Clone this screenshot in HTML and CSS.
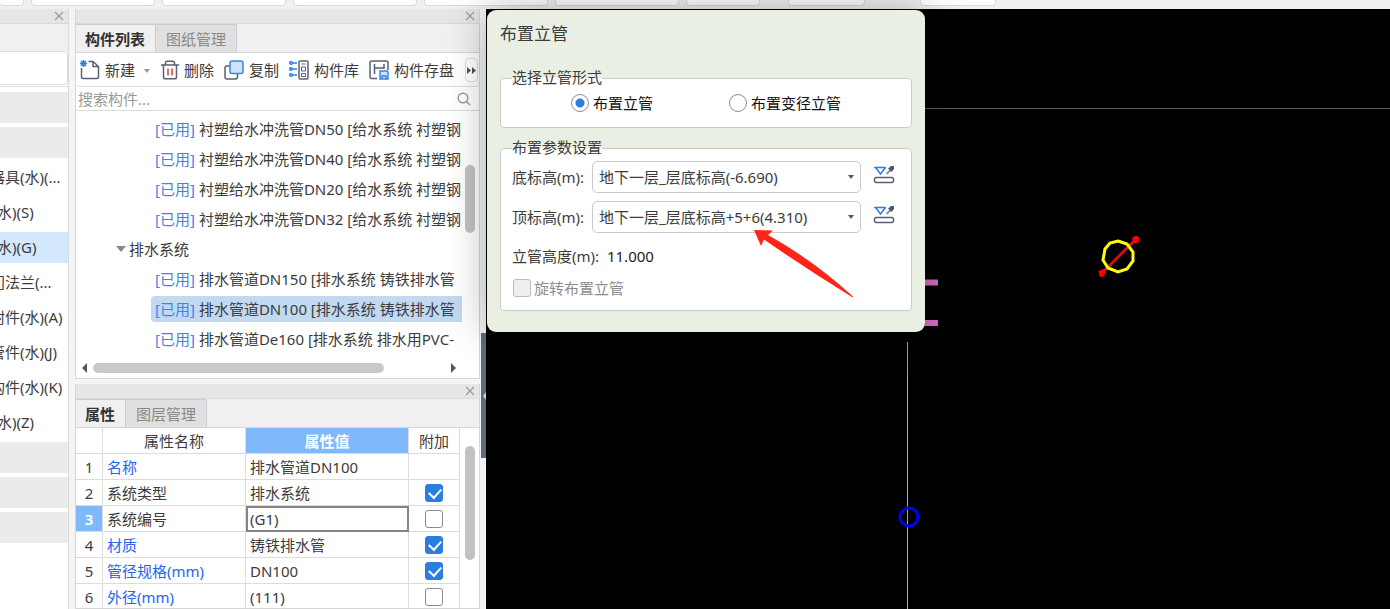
FILE: index.html
```html
<!DOCTYPE html>
<html lang="zh-CN">
<head>
<meta charset="utf-8">
<title>布置立管</title>
<link rel="stylesheet" href="styles.css">
</head>
<body>
<header class="ribbon">
  <div class="group group-first"></div><div class="group"></div><div class="group"></div><div class="group"></div><div class="group"></div><div class="group"></div><div class="group group-small"></div><div class="group group-mid"></div><div class="group group-last"></div>
</header>
<main class="workspace">
  <nav class="nav">
    <div class="titlebar"><button class="close" aria-label="关闭"><svg width="10" height="10" viewBox="0 0 10 10"><path d="M1 1l8 8M9 1l-8 8"/></svg></button></div>
    <div class="nav-head"></div>
    <div class="nav-box"></div>
    <div class="nav-list">
      <div class="nav-item band"></div>
      <div class="nav-item band"></div>
      <a class="nav-item long" href="#">器具(水)(...</a>
      <a class="nav-item" href="#">水)(S)</a>
      <a class="nav-item current" href="#">水)(G)</a>
      <a class="nav-item long" href="#">门法兰(...</a>
      <a class="nav-item long" href="#">附件(水)(A)</a>
      <a class="nav-item long" href="#">管件(水)(J)</a>
      <a class="nav-item long" href="#">构件(水)(K)</a>
      <a class="nav-item" href="#">水)(Z)</a>
      <div class="nav-item band"></div>
      <div class="nav-item band"></div>
      <div class="nav-item band"></div>
    </div>
  </nav>

  <div class="side">
    <section class="panel">
      <div class="titlebar"><button class="close" aria-label="关闭"><svg width="10" height="10" viewBox="0 0 10 10"><path d="M1 1l8 8M9 1l-8 8"/></svg></button></div>
      <div class="tabs"><button class="tab active">构件列表</button><button class="tab">图纸管理</button></div>
      <div class="tools">
        <button class="tool"><svg width="20" height="20" viewBox="0 0 20 20"><path class="ink" d="M1.500 8v9q0 1.500 1.500 1.500h14q1.500 0 1.500-1.500V6.500L13 1.500H8.500M13 1.500v5h5.500"/><path class="blue" d="M1 1l5 5M6 1L1 6M3.500 0v7M0 3.500h7"/></svg>新建<i class="caret"></i></button>
        <button class="tool"><svg width="18" height="20" viewBox="0 0 18 20"><path class="ink" d="M0 5h18M2.500 5v12q0 1.800 1.800 1.800h9.400q1.800 0 1.800-1.800V5M4.500 5V3q0-1.800 1.800-1.800h5.400q1.800 0 1.800 1.800v2"/><path class="red" d="M7 8.500v7M11 8.500v7"/></svg>删除</button>
        <button class="tool"><svg width="20" height="20" viewBox="0 0 20 20"><rect class="ink" x="1" y="6" width="12.500" height="13" rx="2"/><rect class="copy" x="6" y="1" width="13" height="12.500" rx="2"/></svg>复制</button>
        <button class="tool"><svg width="20" height="20" viewBox="0 0 20 20"><rect class="ink" x="10" y="1" width="9" height="18" rx="1"/><path class="ink thin" d="M12.500 4h4M12.500 7h4v4h-4zM12.500 13.500h4v3h-4z"/><path class="blue" d="M3 3h5M3 9h5M3 15h5"/><circle class="blue" cx="2" cy="3" r="1.300"/><circle class="blue" cx="2" cy="9" r="1.300"/><circle class="blue" cx="2" cy="15" r="1.300"/></svg>构件库</button>
        <button class="tool"><svg width="20" height="20" viewBox="0 0 20 20"><path class="ink" d="M8 18.500H3Q1 18.500 1 16.500V3Q1 1 3 1h14q2 0 2 2v7M5.500 4v10M5.500 8H15M15 4v5"/><path class="copy" d="M11 11h7l1 1v7h-8zM13 19v-3h4v3"/></svg>构件存盘</button>
        <button class="more" aria-label="更多"><svg width="9" height="7" viewBox="0 0 9 7"><path d="M0 0l4 3.500L0 7zM5 0l4 3.500L5 7z"/></svg></button>
      </div>
      <div class="search"><input type="text" placeholder="搜索构件..." aria-label="搜索构件"><svg width="14" height="14" viewBox="0 0 14 14"><circle cx="6" cy="6" r="4.800"/><path d="M9.500 9.500L13 13"/></svg></div>
      <div class="tree-wrap">
        <ul class="tree">
          <li class="leaf"><b>[已用]</b>衬塑给水冲洗管DN50 [给水系统 衬塑钢</li>
          <li class="leaf"><b>[已用]</b>衬塑给水冲洗管DN40 [给水系统 衬塑钢</li>
          <li class="leaf"><b>[已用]</b>衬塑给水冲洗管DN20 [给水系统 衬塑钢</li>
          <li class="leaf"><b>[已用]</b>衬塑给水冲洗管DN32 [给水系统 衬塑钢</li>
          <li class="branch"><i class="open"></i>排水系统</li>
          <li class="leaf"><b>[已用]</b>排水管道DN150 [排水系统 铸铁排水管</li>
          <li class="leaf selected"><b>[已用]</b>排水管道DN100 [排水系统 铸铁排水管</li>
          <li class="leaf"><b>[已用]</b>排水管道De160 [排水系统 排水用PVC-</li>
        </ul>
        <div class="vbar"><div class="thumb"></div></div>
      </div>
      <div class="hbar"><i class="left"></i><div class="track"><div class="thumb"></div></div><i class="right"></i></div>
    </section>

    <section class="panel props">
      <div class="titlebar"><button class="close" aria-label="关闭"><svg width="10" height="10" viewBox="0 0 10 10"><path d="M1 1l8 8M9 1l-8 8"/></svg></button></div>
      <div class="tabs"><button class="tab active">属性</button><button class="tab">图层管理</button></div>
      <div class="grid-wrap">
        <table class="grid">
          <colgroup><col class="c-num"><col class="c-name"><col class="c-value"><col class="c-extra"></colgroup>
          <thead><tr><th></th><th>属性名称</th><th class="hot">属性值</th><th>附加</th></tr></thead>
          <tbody>
            <tr><td>1</td><td class="link">名称</td><td>排水管道DN100</td><td></td></tr>
            <tr><td>2</td><td>系统类型</td><td>排水系统</td><td><input type="checkbox" aria-label="附加 系统类型" checked></td></tr>
            <tr><td class="hot">3</td><td>系统编号</td><td class="editing">(G1)</td><td><input type="checkbox" aria-label="附加 系统编号"></td></tr>
            <tr><td>4</td><td class="link">材质</td><td>铸铁排水管</td><td><input type="checkbox" aria-label="附加 材质" checked></td></tr>
            <tr><td>5</td><td class="link">管径规格(mm)</td><td>DN100</td><td><input type="checkbox" aria-label="附加 管径规格" checked></td></tr>
            <tr><td>6</td><td class="link">外径(mm)</td><td>(111)</td><td><input type="checkbox" aria-label="附加 外径"></td></tr>
          </tbody>
        </table>
        <div class="vbar"><div class="thumb"></div></div>
      </div>
    </section>
  </div>

  <div class="splitter"><button class="grip" aria-label="收起"><i class="left"></i></button></div>

  <section class="canvas">
    <svg class="drawing">
      <path d="M438 99.500H3000" stroke="#5c5c5c"/>
      <path d="M421.500 333V3000" stroke="#c98ac2"/>
      <path d="M439 273.500h13M439 314h13" stroke="#d56bc0" stroke-width="6"/>
      <circle cx="423" cy="508" r="9" fill="none" stroke="#0000f0" stroke-width="3"/>
      <path d="M616 264L649 231" stroke="#f00" stroke-width="2.500"/>
      <path d="M612.500 262l5-2 2.500 4-3 4-3.500-.5zM646 229l4-2.500 3.500 2-1 5-4 1z" fill="#f00"/>
      <polygon points="632,232 641,235 647,243 647,252 641,260 632,263 622,259 617,251 619,240 624,234" fill="none" stroke="#ff0" stroke-width="3"/>
    </svg>
    <form class="dialog">
      <h2>布置立管</h2>
      <fieldset class="modes">
        <legend>选择立管形式</legend>
        <div class="radios">
          <label><input type="radio" name="mode" checked>布置立管</label>
          <label><input type="radio" name="mode">布置变径立管</label>
        </div>
      </fieldset>
      <fieldset class="params">
        <legend>布置参数设置</legend>
        <div class="row">
          <label for="bottom">底标高(m):</label>
          <span class="combo"><select id="bottom"><option>地下一层_层底标高(-6.690)</option></select></span>
          <button type="button" class="pick" aria-label="拾取底标高"><svg width="22" height="20" viewBox="0 0 22 20"><path class="blue" d="M1 2.500h12M3 3l4.500 6L12 3"/><path class="stem" d="M13.500 9l5-5"/><path class="head" d="M15 3.500l3-2.500h3v3l-2.500 3z"/><rect class="ink" x="1.500" y="12.500" width="19" height="5" rx="2"/></svg></button>
        </div>
        <div class="row">
          <label for="top">顶标高(m):</label>
          <span class="combo"><select id="top"><option>地下一层_层底标高+5+6(4.310)</option></select></span>
          <button type="button" class="pick" aria-label="拾取顶标高"><svg width="22" height="20" viewBox="0 0 22 20"><path class="blue" d="M1 2.500h12M3 3l4.500 6L12 3"/><path class="stem" d="M13.500 9l5-5"/><path class="head" d="M15 3.500l3-2.500h3v3l-2.500 3z"/><rect class="ink" x="1.500" y="12.500" width="19" height="5" rx="2"/></svg></button>
        </div>
        <div class="height">立管高度(m): <output>11.000</output></div>
        <label class="rotate"><input type="checkbox" disabled>旋转布置立管</label>
      </fieldset>
    </form>
    <svg class="pointer" width="102" height="70" viewBox="0 0 102 70"><path d="M1 1l19 0.500-5 4.500Q60 31 100 67.500q0 1-1 0.500Q52 39 11 10.500L8 17z"/></svg>
  </section>
</main>
</body>
</html>
```
FILE: styles.css
```css
* { box-sizing: border-box; }
body {
  margin: 0;
  height: 100vh;
  overflow: hidden;
  display: flex;
  flex-direction: column;
  background: #f5f5f5;
  color: #3c3c3c;
  font: 15px/20px "Noto Sans", "Noto Sans CJK SC", sans-serif;
}
button, input, select { font: inherit; color: inherit; }
button { border: 0; padding: 0; background: none; }
svg { display: block; flex: none; }
.ink, .blue, .red, .copy { fill: none; stroke-width: 1.5; }
.ink { stroke: #596072; }
.thin { stroke-width: 1; }
.blue { stroke: #2b7fe8; }
.red { stroke: #e03a3f; }
.copy { stroke: #3a86ea; fill: #cfe2fb; }

.ribbon { height: 9px; flex: none; display: flex; gap: 7px; background: #f0f0f0; }
.group { width: 124px; height: 6px; background: #fff; border: 1px solid #dadada; border-top: 0; border-radius: 0 0 4px 4px; }
.group-first { width: 24px; border-left: 0; }
.group-small { width: 74px; }
.group-mid { width: 77px; margin-left: 21px; }
.group-last { width: 76px; margin-left: 48px; }

.workspace { flex: 1; min-height: 0; display: flex; }
.titlebar { height: 15px; flex: none; display: flex; justify-content: flex-end; align-items: center; padding-right: 4px; background: #e6e6e6; border-bottom: 1px solid #d9d9d9; }
.close path { stroke: #999; stroke-width: 1.2; }

.nav { width: 69px; flex: none; overflow: hidden; background: #fff; border-right: 1px solid #d9d9d9; }
.nav-head { height: 27px; background: #f0f0f0; }
.nav-box { height: 34px; border: 1px solid #dcdcdc; border-left: 0; border-radius: 0 4px 4px 0; }
.nav-list { margin-top: 1px; padding-top: 5px; border-top: 1px solid #dcdcdc; display: grid; gap: 4px; }
.nav-item { height: 31px; line-height: 31px; white-space: nowrap; color: inherit; text-decoration: none; text-indent: -3px; }
.long { text-indent: -10px; }
.band { background: #ebebeb; }
.current { background: #d3e7fd; }

.side { width: 405px; margin-left: 6px; flex: none; display: flex; flex-direction: column; gap: 5px; }
.panel { background: #fff; border: 1px solid #d6d6d6; border-top: 0; }
.props { flex: 1; min-height: 0; overflow: hidden; }
.tabs { height: 29px; display: flex; background: #f0f0f0; border-bottom: 1px solid #d6d6d6; }
.tab { padding: 0 10px; background: #e0e0e0; border: 1px solid #c9ccd0; border-left: 0; border-bottom: 0; color: #888; }
.active { padding-left: 9px; background: #f0f0f0; color: #333; font-weight: 600; }
.tools { height: 34px; display: flex; align-items: center; padding: 1px 1px 0 4px; gap: 10px; border-bottom: 1px solid #dcdcdc; border-radius: 4px; }
.tool { display: flex; align-items: center; gap: 5px; white-space: nowrap; }
.caret { border: 3px solid transparent; border-top: 4px solid #999; border-bottom: 0; margin: 2px 1px 0 4px; }
.more { width: 13px; height: 24px; flex: none; margin-left: auto; padding-left: 1px; border: 1px solid #dedede; border-radius: 4px; overflow: hidden; }
.more path { fill: #4a5266; }
.search { height: 24px; display: flex; align-items: center; padding-right: 8px; border-bottom: 1px solid #dcdcdc; }
.search input { flex: 1; min-width: 0; border: 0; padding: 0 2px; outline: 0; background: none; height: 20px; }
.search input::placeholder { color: #999; opacity: 1; }
.search svg { fill: none; stroke: #999; stroke-width: 1.5; }

.tree-wrap { display: flex; }
.tree { flex: 1; min-width: 0; list-style: none; margin: 0; padding: 5px 0 10px 75px; display: grid; gap: 4px; overflow: hidden; }
.leaf { height: 26px; line-height: 26px; padding-left: 4px; white-space: nowrap; overflow: hidden; border-radius: 4px 0 0 4px; }
.leaf b { font-weight: 400; color: #3f82ea; margin-right: 4px; }
.selected { background: #c2d9f2; }
.branch { height: 26px; line-height: 26px; margin-left: -35px; display: flex; align-items: center; gap: 3px; }
.open { border: 5px solid transparent; border-top: 6px solid #888; border-bottom: 0; }
.vbar { width: 17px; flex: none; padding: 54px 3px 0; }
.vbar .thumb { width: 10px; height: 68px; background: #c2c2c2; border-radius: 5px; }
.hbar { display: flex; align-items: center; height: 16px; padding: 0 23px 4px 6px; }
.track { flex: 1; margin: 0 8px 0 6px; }
.track .thumb { width: 83%; height: 10px; background: #c9c9c9; border-radius: 5px; }
.left { border: 5px solid transparent; border-right-color: #4e586a; border-left: 0; }
.right { border: 5px solid transparent; border-left-color: #4e586a; border-right: 0; }

.grid-wrap { display: flex; }
.grid-wrap .vbar { width: 19px; padding: 18px 5px 0; }
.grid-wrap .thumb { height: 114px; }
.grid { flex: 1; table-layout: fixed; border-collapse: separate; border-spacing: 0; }
.c-num { width: 27px; }
.c-name { width: 143px; }
.c-value { width: 163px; }
.c-extra { width: 51px; }
.grid th, .grid td { height: 26px; padding: 0 4px; border-right: 1px solid #dcdcdc; border-bottom: 1px solid #dcdcdc; white-space: nowrap; font-weight: 400; }
.grid td:first-child, .grid td:last-child { text-align: center; }
.grid .hot { background: #80b9f9; color: #fff; font-weight: 600; }
.grid .link { color: #2563f5; }
.grid .editing { border: 2px solid #858585; padding: 0 2px; }
.grid input { appearance: none; display: block; width: 18px; height: 18px; margin: 0 auto; border: 1px solid #8c8c8c; border-radius: 3px; background: #fff; }
.grid input:checked { border-color: #2b7de0; background: #2b7de0; }
.grid input:checked::before { content: ""; display: block; width: 6px; height: 10px; margin: 1px 0 0 5px; border: solid #fff; border-width: 0 2px 2px 0; transform: rotate(42deg); }

.splitter { width: 6px; flex: none; background: #f5f5f5; padding: 324px 0 0 1px; }
.grip { display: flex; align-items: center; justify-content: flex-end; width: 5px; height: 125px; background: #5f6b79; overflow: hidden; }
.grip .left { border-width: 4px 3px 4px 0; border-right-color: #c9d0d8; }

.canvas { flex: 1; min-width: 0; position: relative; background: #000; }
.drawing { position: absolute; inset: 0; width: 100%; height: 100%; }
.dialog { position: absolute; left: 1px; top: 1px; width: 438px; padding: 12px 13px 21px; background: #e9efe3; border-radius: 9px; box-shadow: 0 0 40px rgba(0, 0, 0, .3); }
.dialog h2 { margin: 0 0 22px; font-size: 17px; line-height: 24px; font-weight: 400; }
.dialog fieldset { margin: 0; min-width: 0; border: 1px solid #c9ccc9; border-radius: 4px; background: #fff; padding: 0 11px 9px; }
.dialog legend { padding: 0; height: 20px; line-height: 18px; }
.radios { display: flex; gap: 76px; height: 30px; padding-left: 59px; color: #111; }
.radios label { display: flex; align-items: center; gap: 4px; }
.radios input { appearance: none; width: 18px; height: 18px; margin: 0; border: 1px solid #8c8c8c; border-radius: 50%; background: #fff; }
.radios input:checked { background: radial-gradient(circle, #2b7de0 4px, #fff 5px); }
.dialog .params { margin-top: 10px; padding-top: 3px; padding-bottom: 10px; }
.row { display: flex; align-items: center; height: 32px; margin-bottom: 8px; }
.row label { width: 80px; white-space: nowrap; }
.combo { flex: 1; position: relative; }
.combo::after { content: ""; position: absolute; right: 7px; top: 14px; border: 3px solid transparent; border-top: 4px solid #4e586a; border-bottom: 0; }
.combo select { appearance: none; display: block; width: 100%; height: 32px; padding: 0 6px; border: 1px solid #c9c9c9; border-radius: 5px; background: #fff; }
.pick { margin: 0 5px 4px 12px; }
.stem { stroke: #8a91a0; stroke-width: 2; }
.head { fill: #4e586a; }
.height { height: 30px; line-height: 30px; }
.height output { margin-left: 4px; color: #222; }
.rotate { display: flex; align-items: center; gap: 3px; height: 24px; margin: 5px 0 0 1px; color: #8c8c8c; }
.rotate input { appearance: none; width: 18px; height: 18px; margin: 0; border: 1px solid #bbb; border-radius: 3px; background: #efefef; }
.pointer { position: absolute; left: 267px; top: 220px; fill: #ff2419; pointer-events: none; }
```
